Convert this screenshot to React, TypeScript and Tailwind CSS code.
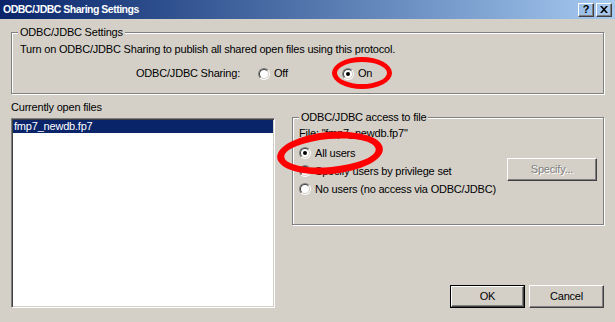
import React from 'react';

const FONT = { fontFamily: "'Liberation Sans', Arial, sans-serif" };

function Radio({ checked = false }: { checked?: boolean }) {
  return (
    <span className="w-[12px] h-[12px] shrink-0 rounded-full border border-t-[#808080] border-l-[#808080] border-r-white border-b-white">
      <span className="w-[10px] h-[10px] rounded-full border border-t-[#404040] border-l-[#404040] border-r-[#D4D0C8] border-b-[#D4D0C8] bg-white flex items-center justify-center">
        {checked && <span className="w-[4px] h-[4px] rounded-full bg-black" />}
      </span>
    </span>
  );
}

function Group({ title, className, children }: { title: string; className?: string; children: React.ReactNode }) {
  return (
    <div className={`relative border border-[#808080] shadow-[inset_1px_1px_0_#fff,1px_1px_0_#fff] ${className ?? ''}`}>
      <span className="absolute left-[6px] top-[-7px] px-[2px] bg-[#D4D0C8] leading-[13px]">{title}</span>
      {children}
    </div>
  );
}

function Button({ children, isDefault, disabled, className }: { children: React.ReactNode; isDefault?: boolean; disabled?: boolean; className?: string }) {
  const inner = (
    <div
      className={`w-full h-full flex items-center justify-center border border-t-white border-l-white border-r-[#404040] border-b-[#404040] shadow-[inset_-1px_-1px_0_#808080] ${
        disabled ? 'text-[#808080] [text-shadow:1px_1px_0_#fff]' : 'text-black'
      }`}
    >
      {children}
    </div>
  );
  return (
    <div className={`${className ?? ''} ${isDefault ? 'border border-black' : ''}`}>{inner}</div>
  );
}

export default function App() {
  return (
    <div className="relative w-[615px] h-[322px] bg-[#D4D0C8] overflow-hidden text-[11px] tracking-[-0.2px] text-black leading-[13px]" style={FONT}>
      {/* Title bar */}
      <div className="h-[19px] flex items-center justify-between pl-[3px] pr-[3px] bg-gradient-to-r from-[#0A246A] to-[#A6CAF0]">
        <span className="text-white font-bold text-[10.5px] tracking-[-0.5px]">ODBC/JDBC Sharing Settings</span>
        <div className="flex gap-[2px]">
          <Button className="w-[16px] h-[14px]">
            <span className="font-bold text-[11px] leading-none">?</span>
          </Button>
          <Button className="w-[16px] h-[14px]">
            <svg width="8" height="7" viewBox="0 0 8 7">
              <path d="M0 0h2l2 2.2L6 0h2L5 3.5 8 7H6L4 4.8 2 7H0l3-3.5z" fill="#000" />
            </svg>
          </Button>
        </div>
      </div>

      <div className="px-[11px] pt-[13px]">
        <Group title="ODBC/JDBC Settings" className="h-[62px] pl-[8px] pt-[10px]">
          <div>Turn on ODBC/JDBC Sharing to publish all shared open files using this protocol.</div>
          <div className="flex items-center mt-[11px] h-[13px]">
            <span className="w-[220px] text-right">ODBC/JDBC Sharing:</span>
            <div className="ml-[18px] w-[84px] flex items-center gap-[4px]">
              <Radio />
              <span>Off</span>
            </div>
            <div className="flex items-center gap-[4px]">
              <Radio checked />
              <span>On</span>
            </div>
          </div>
        </Group>

        <div className="flex mt-[7px]">
          <div className="w-[264px]">
            <div className="h-[13px]">Currently open files</div>
            <div className="mt-[4px] h-[190px] bg-white p-[1px] border border-t-[#808080] border-l-[#808080] border-r-white border-b-white shadow-[inset_1px_1px_0_#404040,inset_-1px_-1px_0_#D4D0C8]">
              <div className="h-[13px] bg-[#0A246A] text-white pl-[1px]">fmp7_newdb.fp7</div>
            </div>
          </div>

          <div className="ml-[17px] w-[312px]">
            <Group title="ODBC/JDBC access to file" className="mt-[16px] h-[108px] pl-[6px] pt-[9px]">
              <div>File: "fmp7_newdb.fp7"</div>
              <div className="flex">
                <div className="flex-1 mt-[4px]">
                  <div className="h-[18px] flex items-center gap-[4px]">
                    <Radio checked />
                    <span>All users</span>
                  </div>
                  <div className="h-[18px] flex items-center gap-[4px]">
                    <Radio />
                    <span>Specify users by privilege set</span>
                  </div>
                  <div className="h-[18px] flex items-center gap-[4px]">
                    <Radio />
                    <span>No users (no access via ODBC/JDBC)</span>
                  </div>
                </div>
                <Button disabled className="w-[90px] h-[23px] mt-[18px] mr-[6px]">Specify...</Button>
              </div>
            </Group>

            <div className="flex justify-end gap-[4px] mt-[60px]">
              <Button isDefault className="w-[75px] h-[23px]">OK</Button>
              <Button className="w-[75px] h-[23px]">Cancel</Button>
            </div>
          </div>
        </div>
      </div>

      {/* red annotation marks */}
      <div className="absolute left-[332px] top-[57px] w-[60px] h-[32px] rounded-[50%] border-[5px] border-[#FF0000] pointer-events-none" />
      <div className="absolute left-[277px] top-[132px] w-[106px] h-[42px] rounded-[50%] border-[7px] border-[#FF0000] -rotate-[5deg] pointer-events-none" />
    </div>
  );
}
